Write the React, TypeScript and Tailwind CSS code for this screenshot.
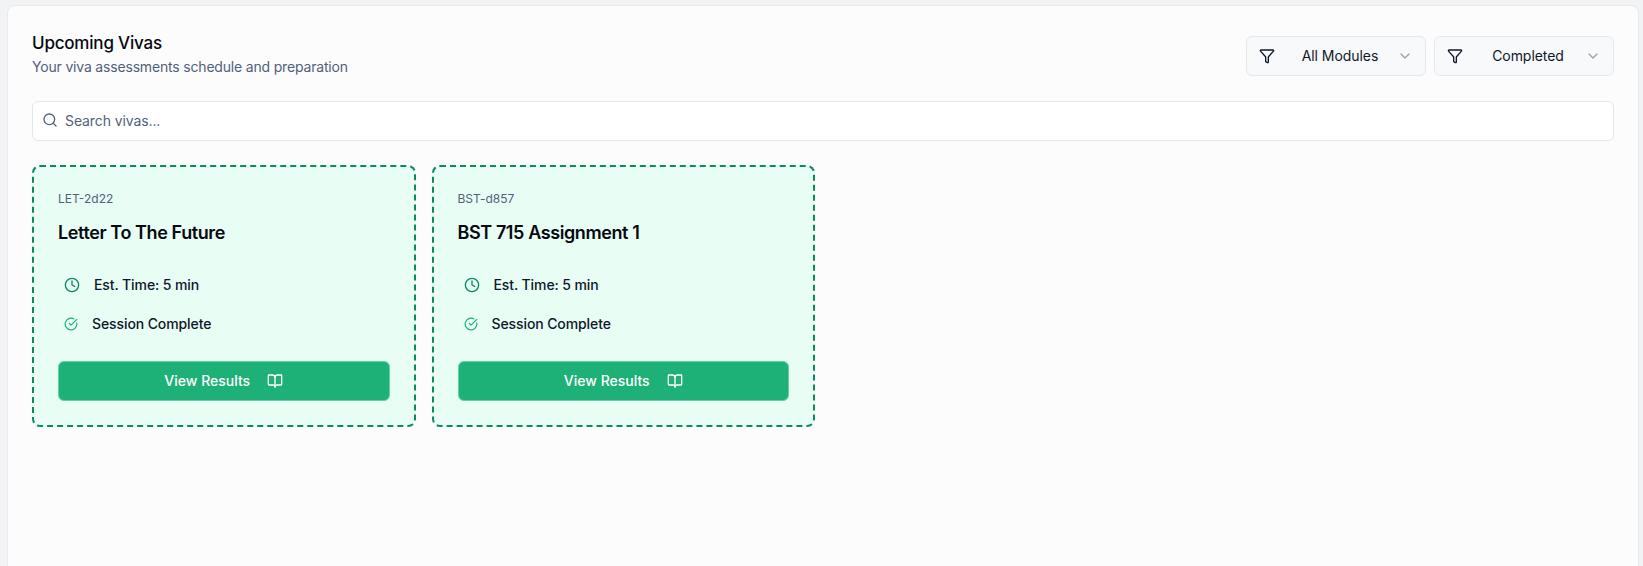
import { BookOpen, CircleCheckBig, ChevronDown, Clock, Filter, Search } from "lucide-react"

interface SelectProps {
  label: string
}

function FilterSelect(props: SelectProps) {
  return (
    <div className="flex items-center w-[180px] h-10 pl-3 pr-3 bg-[#f8f9fb] border border-[#e2e8f0] rounded-md text-sm tracking-[-0.05px] text-[#0f172a]">
      <Filter className="w-4 h-4 shrink-0" />
      <span className="flex-1 text-center pl-2">{props.label}</span>
      <ChevronDown className="w-4 h-4 text-gray-400 shrink-0" />
    </div>
  )
}

interface VivaProps {
  code: string
  title: string
}

function VivaCard(props: VivaProps) {
  return (
    <div className="h-[262px] p-6 bg-[#e8fdf4] border-2 border-dashed border-[#0b8a62] rounded-lg flex flex-col">
      <p className="text-xs leading-4 text-[#52617a]">{props.code}</p>
      <h3 className="mt-[12px] text-lg leading-7 font-semibold tracking-[-0.4px] text-[#05080f]">{props.title}</h3>
      <div className="mt-[26px] flex items-center h-6 pl-1.5 text-sm font-medium tracking-[-0.1px] text-[#0f172a]">
        <Clock className="w-4 h-4 text-[#0b8a62] mr-[14px]" />
        <span>Est. Time: 5 min</span>
      </div>
      <div className="mt-[15px] flex items-center h-6 pl-1.5 text-sm font-medium tracking-[-0.1px] text-[#0f172a]">
        <CircleCheckBig className="w-[14px] h-[14px] text-[#1db179] mr-[14px]" />
        <span>Session Complete</span>
      </div>
      <button className="mt-auto h-10 flex items-center justify-center gap-[17px] rounded-md bg-[#1db177] border border-[#5fd3a6] text-sm font-medium text-white">
        <span>View Results</span>
        <BookOpen className="w-4 h-4" />
      </button>
    </div>
  )
}

export default function App() {
  return (
    <div className="h-[566px] overflow-hidden bg-[#f1f3f5] pt-[5px] pl-[7px] pr-[4px] font-['Inter',sans-serif]">
      <div className="h-[600px] p-6 pt-[25px] bg-[#fcfcfd] border border-[#e7eaee] rounded-lg">
        <div className="flex items-start justify-between">
          <div>
            <h2 className="text-[17px] leading-6 font-medium tracking-[-0.2px] text-[#05080f]">Upcoming Vivas</h2>
            <p className="mt-[2px] text-sm leading-5 tracking-[-0.18px] text-[#52617a]">Your viva assessments schedule and preparation</p>
          </div>
          <div className="flex gap-2 mt-[5px]">
            <FilterSelect label="All Modules" />
            <FilterSelect label="Completed" />
          </div>
        </div>
        <div className="mt-[24px] h-10 flex items-center gap-[7px] pl-[9px] pr-2 bg-white border border-[#e2e8f0] rounded-md text-sm tracking-[-0.1px] text-[#52617a]">
          <Search className="w-4 h-4 -mt-0.5" />
          <span>Search vivas...</span>
        </div>
        <div className="mt-6 grid grid-cols-4 gap-4">
          <VivaCard code="LET-2d22" title="Letter To The Future" />
          <VivaCard code="BST-d857" title="BST 715 Assignment 1" />
        </div>
      </div>
    </div>
  )
}
